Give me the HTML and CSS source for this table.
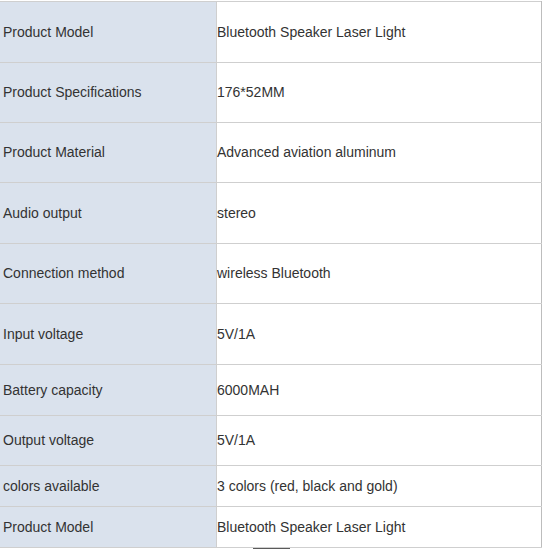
FILE: index.html
```html
<!DOCTYPE html>
<html>
<head>
<meta charset="utf-8">
<link rel="stylesheet" href="styles.css">
</head>
<body>
<div class="page">
<table class="spec">
  <tr class="r61"><td class="k">Product Model</td><td class="v">Bluetooth Speaker Laser Light</td></tr>
  <tr class="r60"><td class="k">Product Specifications</td><td class="v">176*52MM</td></tr>
  <tr class="r60"><td class="k">Product Material</td><td class="v">Advanced aviation aluminum</td></tr>
  <tr class="r61"><td class="k">Audio output</td><td class="v">stereo</td></tr>
  <tr class="r60"><td class="k">Connection method</td><td class="v">wireless Bluetooth</td></tr>
  <tr class="r61"><td class="k">Input voltage</td><td class="v">5V/1A</td></tr>
  <tr class="r51"><td class="k">Battery capacity</td><td class="v">6000MAH</td></tr>
  <tr class="r50"><td class="k">Output voltage</td><td class="v">5V/1A</td></tr>
  <tr class="r41"><td class="k">colors available</td><td class="v">3 colors (red, black and gold)</td></tr>
  <tr class="r41"><td class="k">Product Model</td><td class="v">Bluetooth Speaker Laser Light</td></tr>
</table>
<div class="below"><span class="bar"></span></div>
</div>
</body>
</html>
```
FILE: styles.css
```css
html, body {
  margin: 0;
  padding: 0;
  background: #ffffff;
}
.page {
  padding-top: 1px;
  width: 545px;
}
.spec {
  border-collapse: collapse;
  width: 542px;
  table-layout: fixed;
  font-family: "Liberation Sans", Arial, sans-serif;
  font-size: 14px;
  color: #333333;
}
.spec td {
  border: 1px solid #cfcfcf;
  padding: 0 0 1px 2px;
  vertical-align: middle;
  white-space: nowrap;
}
.spec td.k {
  width: 213px;
  background: #dae2ed;
  border-left-color: #dae2ed;
}
.spec td.v {
  padding-left: 0;
  border-right-color: #bdbdbd;
}
.r61 td { height: 59px; }
.r60 td { height: 58px; }
.r51 td { height: 49px; }
.r50 td { height: 48px; }
.r41 td { height: 39px; }
.below {
  padding-left: 253px;
  height: 2px;
}
.bar {
  display: block;
  width: 37px;
  height: 2px;
  background: #5a5a5a;
}
```
